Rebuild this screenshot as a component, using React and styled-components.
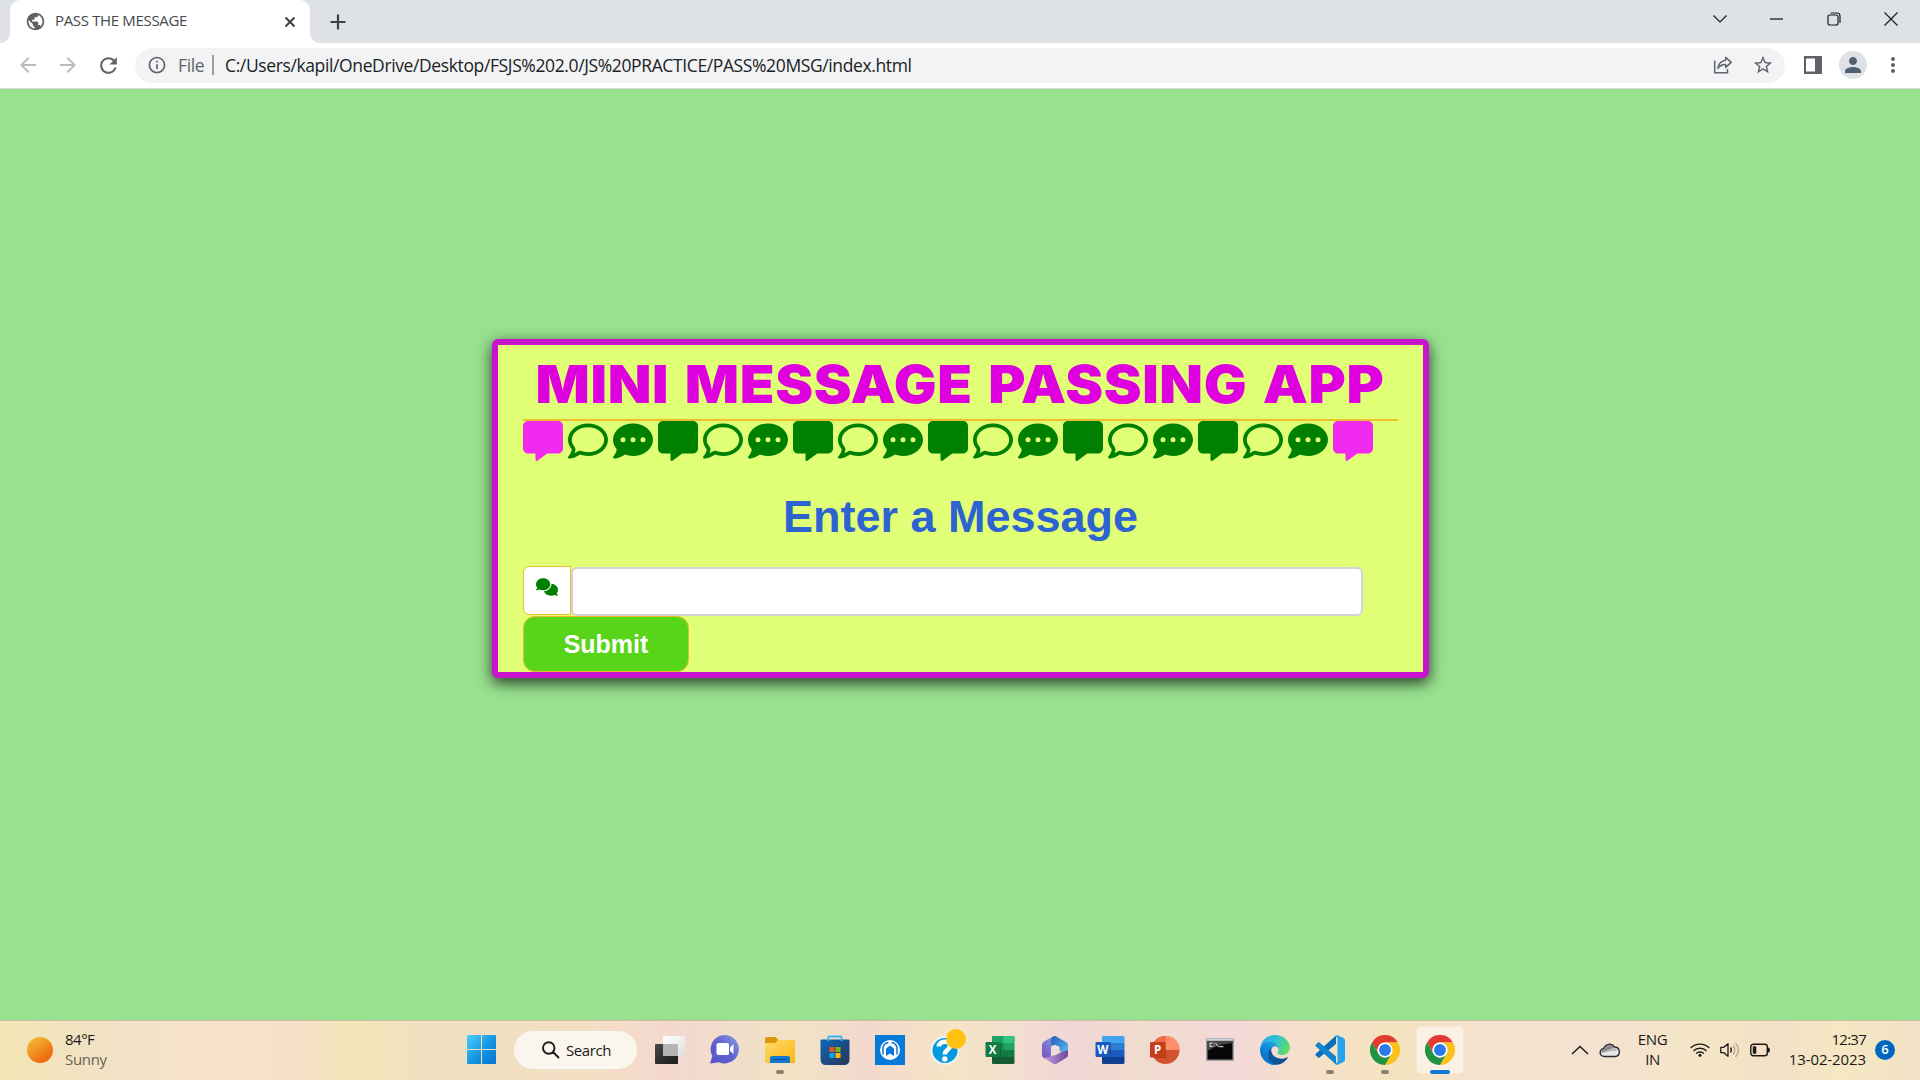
import React from "react";
import styled, { createGlobalStyle, css } from "styled-components";
import {
  MdPublic, MdInfoOutline, MdStarOutline, MdArrowBack, MdArrowForward,
  MdRefresh, MdMoreVert, MdPerson,
} from "react-icons/md";
import { FaMessage, FaRegComment, FaCommentDots, FaComments } from "react-icons/fa6";

const Global = createGlobalStyle`
  * { box-sizing: border-box; }
  html, body { margin: 0; padding: 0; overflow: hidden; }
  body { font-family: "Open Sans", "Noto Sans", sans-serif; }
  svg { display: block; flex: none; }
`;

const Screen = styled.div`
  width: 1920px;
  height: 1080px;
  display: flex;
  flex-direction: column;
  overflow: hidden;
`;

/* ---------- browser chrome ---------- */
const TabStrip = styled.header`
  height: 43px;
  flex: none;
  display: flex;
  align-items: stretch;
  padding-left: 10px;
  background: #dee1e6;
`;

const Tab = styled.div`
  position: relative;
  width: 300px;
  display: flex;
  align-items: center;
  padding: 0 14px 0 15px;
  background: #fff;
  border-radius: 10px 10px 0 0;
  &::before, &::after {
    content: "";
    position: absolute;
    bottom: 0;
    width: 10px;
    height: 10px;
  }
  &::before { left: -10px; background: radial-gradient(circle at 0 0, transparent 9.5px, #fff 10.5px); }
  &::after { right: -10px; background: radial-gradient(circle at 100% 0, transparent 9.5px, #fff 10.5px); }
`;

const TabTitle = styled.span`
  flex: 1;
  margin: -3px 0 0 9px;
  font-size: 15px;
  letter-spacing: -0.34px;
  line-height: 20px;
  color: #45494d;
  white-space: nowrap;
`;

const NewTab = styled.div`
  margin-left: 20px;
  display: flex;
  align-items: center;
`;

const WindowControls = styled.div`
  margin-left: auto;
  padding-right: 1px;
  display: flex;
`;

const WindowButton = styled.div`
  width: 57px;
  height: 37px;
  display: flex;
  align-items: center;
  justify-content: center;
`;

const Toolbar = styled.div`
  height: 46px;
  flex: none;
  display: flex;
  align-items: center;
  padding: 0 0 1px 8px;
  background: #fff;
  border-bottom: 1px solid #d5d8dc;
`;

const NavButton = styled.div`
  width: 40px;
  display: flex;
  justify-content: center;
  color: ${(p) => (p.$dim ? "#babcbe" : "#5f6368")};
`;

const AddressBar = styled.div`
  width: 1650px;
  height: 35px;
  margin: 0 8px 0 7px;
  padding: 0 2px 0 12px;
  display: flex;
  align-items: center;
  border-radius: 18px;
  background: #f1f3f4;
  color: #5f6368;
`;

const Scheme = styled.span`
  width: 34px;
  margin-left: 11px;
  font-size: 17.5px;
  letter-spacing: -0.4px;
`;

const Divider = styled.span`
  width: 2px;
  height: 20px;
  background: #9b9ea2;
`;

const Url = styled.span`
  flex: 1;
  margin-left: 11px;
  font-size: 17.5px;
  letter-spacing: -0.38px;
  color: #202124;
  white-space: nowrap;
`;

const ToolbarAction = styled.div`
  width: 40px;
  display: flex;
  justify-content: center;
  color: #5f6368;
`;

const Avatar = styled.div`
  width: 28px;
  height: 28px;
  border-radius: 50%;
  display: flex;
  align-items: center;
  justify-content: center;
  background: #dee1e6;
  color: #525e72;
`;

/* ---------- page ---------- */
const Page = styled.main`
  height: 931px;
  flex: none;
  display: flex;
  justify-content: center;
  align-items: flex-start;
  padding-top: 250px;
  background: #98e28f;
  font-family: "Liberation Sans", Arial, sans-serif;
`;

const Card = styled.section`
  width: 937px;
  height: 339px;
  margin-left: 1px;
  padding: 0 25px;
  display: flex;
  flex-direction: column;
  align-items: flex-start;
  border: 6px solid #c814cf;
  border-radius: 6px;
  background: #e0ff76;
  box-shadow: 0 5px 15px rgba(0, 0, 0, 0.75);
`;

const Title = styled.h1`
  width: 100%;
  height: 76px;
  margin: 0;
  padding-top: 7px;
  display: flex;
  justify-content: center;
  border-bottom: 2px solid #edbf2a;
`;

const TitleText = styled.span`
  font-family: Inter, "Liberation Sans", sans-serif;
  font-size: 52.6px;
  font-weight: 900;
  line-height: 64px;
  letter-spacing: 0.6px;
  word-spacing: 3.4px;
  white-space: nowrap;
  color: #df00df;
  transform: scaleX(1.08);
`;

const IconRow = styled.div`
  display: flex;
  gap: 5px;
  height: 40px;
`;

const Bubble = styled.span`
  width: 40px;
  height: 40px;
  color: ${(p) => (p.$pink ? "#f02aee" : "#008000")};
`;

const Prompt = styled.h2`
  width: 100%;
  height: 105px;
  margin: 0;
  padding-top: 3px;
  font-size: 45px;
  line-height: 105px;
  text-align: center;
  color: #2d62d1;
`;

const Field = styled.div`
  display: flex;
  align-items: flex-start;
`;

const FieldIcon = styled.span`
  width: 48px;
  height: 49px;
  display: flex;
  justify-content: center;
  padding-top: 9px;
  border: 1px solid #efbe2b;
  border-radius: 6px 0 0 6px;
  background: #fff;
  color: #008000;
`;

const Input = styled.input`
  width: 792px;
  height: 49px;
  margin: 1px 0 0;
  border: 2px solid #d3d3d3;
  border-radius: 6px;
  background: #fff;
  outline: none;
`;

const Submit = styled.button`
  width: 166px;
  height: 56px;
  padding: 0;
  border: 1px solid #e9bb26;
  border-radius: 12px;
  background: #58d518;
  font: bold 25px "Liberation Sans", Arial, sans-serif;
  color: #fff;
`;

/* ---------- taskbar ---------- */
const Taskbar = styled.footer`
  height: 60px;
  flex: none;
  display: flex;
  align-items: center;
  padding-bottom: 2px;
  border-top: 1px solid #cdbba9;
  background: linear-gradient(90deg, #f3e6b4 0, #f1e2c6 110px, #f8e3cb 210px, #f8dfcb 290px, #f2e6b8 350px,
    #efe0c2 450px, #f5dfc4 590px, #f4d8cf 670px, #f0decb 740px, #f1e3c4 790px, #f3d9cd 870px, #f5e4c4 950px,
    #f3dfcf 1010px, #f2d6d6 1070px, #f1dccf 1140px, #f3d8d8 1230px, #f5e2c6 1330px, #f4e3bf 1400px,
    #f5e2cf 1480px, #f4e2d0 1600px, #f5e6c6 1710px, #f3e0c6 1780px, #f5e8c2 1840px, #f1e1c6 1920px);
`;

const Weather = styled.div`
  width: 455px;
  padding-left: 27px;
  display: flex;
  align-items: center;
  gap: 12px;
`;

const Sun = styled.span`
  width: 26px;
  height: 26px;
  border-radius: 50%;
  background: linear-gradient(145deg, #efbb30 8%, #f29320 45%, #f0640c 85%);
`;

const Lines = styled.div`
  display: flex;
  flex-direction: column;
  align-items: ${(p) => p.$align || "flex-start"};
  padding-bottom: 2px;
  font-size: 15px;
  line-height: 20px;
  letter-spacing: ${(p) => p.$ls || 0}px;
  color: #1b1a18;
  white-space: nowrap;
`;

const Time = styled.span`
  letter-spacing: -0.75px;
`;

const Muted = styled.span`
  color: #6a6253;
  letter-spacing: -0.3px;
`;

const Slot = styled.div`
  position: relative;
  width: ${(p) => p.$w || 55}px;
  height: 57px;
  display: flex;
  align-items: center;
  justify-content: center;
`;

const ActiveTile = styled.div`
  width: 48px;
  height: 48px;
  display: flex;
  align-items: center;
  justify-content: center;
  border: 1px solid #f3e8d8;
  border-radius: 5px;
  background: #faf1e3;
`;

const Running = styled.span`
  position: absolute;
  left: 50%;
  bottom: 4px;
  height: 4px;
  border-radius: 2px;
  transform: translateX(-50%);
  ${(p) => p.$active
    ? css`width: 20px; background: #0a78d4;`
    : css`width: 8px; background: #8c8071;`}
`;

const NoticeDot = styled.span`
  position: absolute;
  left: 29px;
  top: 8px;
  width: 20px;
  height: 20px;
  border-radius: 50%;
  background: #ffc20e;
`;

const SearchPill = styled.div`
  width: 123px;
  height: 38px;
  margin: 0 5px 0 6px;
  padding-left: 28px;
  display: flex;
  align-items: center;
  gap: 6px;
  border-radius: 19px;
  background: #faf5ed;
  box-shadow: 0 0 0 1px #efe0cc;
  font-size: 15px;
  letter-spacing: -0.4px;
  color: #1b1a18;
`;

const Tray = styled.div`
  margin-left: auto;
  display: flex;
  align-items: center;
  padding-right: 25px;
`;

const TrayIcon = styled.div`
  width: ${(p) => p.$w}px;
  display: flex;
  justify-content: ${(p) => (p.$end ? "flex-end" : "center")};
`;

const Badge = styled.span`
  width: 20px;
  height: 20px;
  margin-left: 9px;
  border-radius: 50%;
  background: #0067c0;
  color: #fff;
  font-size: 13px;
  font-weight: 600;
  line-height: 19px;
  text-align: center;
`;

const GlyphText = styled.text`
  font-family: "Open Sans", sans-serif;
  font-weight: 700;
  fill: #fff;
`;

/* ---------- drawings ---------- */
const Stroke = ({ w, h, d, color = "#1b1b1b", sw = 1.2 }) => (
  <svg width={w} height={h} viewBox={`0 0 ${w} ${h}`} fill="none" stroke={color} strokeWidth={sw}>
    <path d={d} />
  </svg>
);

const ShareIcon = () => (
  <svg width="20" height="20" viewBox="0 0 20 20" fill="none" stroke="#5f6368" strokeWidth="1.5">
    <path d="M1.700 5.500V17.800H14.500V14" />
    <path d="M12.700 2.200 18.200 7.400 12.700 12.400V9.400C9 9.400 6.600 10.600 4.900 13.400 5.500 9 8 6 12.700 5.300Z" strokeLinejoin="round" />
  </svg>
);

const PanelIcon = () => (
  <svg width="18" height="18" viewBox="0 0 18 18">
    <path fill="#5f6368" fillRule="evenodd" d="M0 0H18V18H0ZM2 2.500V15.500H11V2.500Z" />
  </svg>
);

const WindowsLogo = () => (
  <svg width="29" height="29" viewBox="0 0 29 29">
    <defs>
      <linearGradient id="win" x1="0" y1="0" x2="1" y2="1">
        <stop offset="0" stopColor="#4fd0fb" /><stop offset=".55" stopColor="#1493e0" /><stop offset="1" stopColor="#0474cf" />
      </linearGradient>
    </defs>
    <path fill="url(#win)" d="M1 0H14V14H0V1Q0 0 1 0ZM15 0H28Q29 0 29 1V14H15ZM0 15H14V29H1Q0 29 0 28ZM15 15H29V28Q29 29 28 29H15Z" />
  </svg>
);

const TaskView = () => (
  <svg width="30" height="28" viewBox="0 0 30 28">
    <defs>
      <linearGradient id="tvd" x1="0" y1="0" x2="1" y2="1"><stop stopColor="#474744" /><stop offset="1" stopColor="#1b1b1b" /></linearGradient>
      <linearGradient id="tvl" x1="0" y1="0" x2="1" y2="1"><stop stopColor="#fff" /><stop offset="1" stopColor="#dededc" /></linearGradient>
    </defs>
    <rect x="0" y="8" width="23" height="20" rx="1" fill="url(#tvd)" />
    <rect x="8" y="0" width="22" height="20" rx="1" fill="url(#tvl)" />
    <rect x="8" y="8" width="15" height="12" fill="#b4b4b2" />
  </svg>
);

const ChatIcon = () => (
  <svg width="30" height="29" viewBox="0 0 30 29">
    <defs><linearGradient id="chat" x1="0" y1="1" x2="1" y2="0"><stop stopColor="#5a4fcf" /><stop offset=".5" stopColor="#5f62cf" /><stop offset="1" stopColor="#86a0e0" /></linearGradient></defs>
    <path fill="url(#chat)" d="M15 0A14.200 14.200 0 1 1 9 27.200L.8 28.500Q0 28.500.4 27.500L2.300 21A14.200 14.200 0 0 1 15 0Z" />
    <rect x="6.500" y="8" width="12.500" height="12" rx="1.800" fill="#fff" />
    <path fill="#fff" d="M20 12.500 23.500 9V19L20 15.800Z" />
  </svg>
);

const FolderIcon = () => (
  <svg width="30" height="28" viewBox="0 0 30 28">
    <defs><linearGradient id="fold" x1="0" y1="0" x2="1" y2="1"><stop stopColor="#ffdb69" /><stop offset="1" stopColor="#f9b714" /></linearGradient></defs>
    <path fill="#dc9709" d="M1.500 1H10.500L13.500 4H29V12H0V2.500Q0 1 1.500 1Z" />
    <path fill="url(#fold)" d="M0 7H10L13 4H29Q30 4 30 5V25.500Q30 27 28.500 27H1.500Q0 27 0 25.500Z" />
    <path fill="#1079ce" d="M5 27V22Q5 20 7 20H23Q25 20 25 22V27Z" />
    <path fill="#0a4f94" d="M8 23H22V24H8Z" />
  </svg>
);

const StoreIcon = () => (
  <svg width="30" height="30" viewBox="0 0 30 30">
    <defs><linearGradient id="store" x1="0" y1="0" x2="1" y2="1"><stop stopColor="#0d67b5" /><stop offset="1" stopColor="#2a3457" /></linearGradient></defs>
    <path fill="url(#store)" d="M1.500 4.500H28.500Q29.500 4.500 29.500 5.500V24Q29.500 30 24 30H6Q.5 30 .5 24V5.500Q.5 4.500 1.500 4.500Z" />
    <path fill="none" stroke="#35b8f0" strokeWidth="1.800" d="M8.300 6V2.500Q8.300 1.500 9.300 1.500H20.700Q21.700 1.500 21.700 2.500V6" />
    <path fill="#f25022" d="M9.500 12H14.500V17H9.500Z" /><path fill="#7fba00" d="M15.500 12H20.500V17H15.500Z" />
    <path fill="#00a4ef" d="M9.500 18H14.500V23H9.500Z" /><path fill="#ffb900" d="M15.500 18H20.500V23H15.500Z" />
  </svg>
);

const SupportIcon = () => (
  <svg width="30" height="30" viewBox="0 0 30 30">
    <path fill="#0779d8" d="M0 0H30V30H0Z" />
    <circle cx="15" cy="15" r="10" fill="#fff" />
    <path fill="#0779d8" d="M11 21V13.500L15 10.500 19 13.500V21L15 18.500Z" />
    <path fill="none" stroke="#0779d8" strokeWidth="1.500" d="M8 19.500V12.500Q9 8 13.500 7.500M22 19.500V12.500Q21 8 16.500 7.500" />
  </svg>
);

const HelpIcon = () => (
  <svg width="30" height="30" viewBox="0 0 30 30">
    <circle cx="15" cy="15.500" r="13.500" fill="#0498dc" stroke="#eaf4f8" strokeWidth="2" />
    <path fill="none" stroke="#fff" strokeWidth="4.600" d="M8.800 11.500C9 5.500 20 5 20 11 20 15 14.800 14.500 14.800 19.500" />
    <circle cx="14.800" cy="24" r="2.700" fill="#fff" />
  </svg>
);

const OfficeBook = ({ letter, bands, plate }) => (
  <svg width="30" height="28" viewBox="0 0 30 28">
    <path fill={bands[0]} d="M8 0H28Q29.500 0 29.500 1.500V7H7V1Q7 0 8 0Z" />
    <path fill={bands[1]} d="M7 7H29.500V14H7Z" /><path fill={bands[2]} d="M7 14H29.500V21H7Z" />
    <path fill={bands[3]} d="M7 21H29.500V26.500Q29.500 28 28 28H8Q7 28 7 27Z" />
    {bands[4] && <path fill={bands[4]} d="M18.500 0H28Q29.500 0 29.500 1.500V7H18.500Z" />}
    {bands[5] && <path fill={bands[5]} d="M7 7H18.500V14H7Z" />}
    <path fill="#000" opacity=".2" d="M7 6H16V21H7Z" />
    <rect x="0.500" y="6" width="14.500" height="15" rx="1.200" fill={plate} />
    <GlyphText x="7.700" y="17.700" fontSize="11.500" textAnchor="middle">{letter}</GlyphText>
  </svg>
);

const PowerPoint = () => (
  <svg width="30" height="28" viewBox="0 0 30 28">
    <circle cx="15.500" cy="14" r="14" fill="#d35230" />
    <path fill="#ed6c47" d="M1.500 14A14 14 0 0 1 15.500 0V14Z" />
    <path fill="#ff8f6b" d="M15.500 0A14 14 0 0 1 29.500 14H15.500Z" />
    <path fill="#000" opacity=".2" d="M3 6H16V22H5Z" />
    <rect x="0" y="6" width="15" height="15.500" rx="1.200" fill="#c43e1c" />
    <GlyphText x="7.600" y="18" fontSize="11.500" textAnchor="middle">P</GlyphText>
  </svg>
);

const M365Icon = () => (
  <svg width="26" height="28" viewBox="0 0 26 28">
    <defs>
      <linearGradient id="ma" x1="0" y1="1" x2="1" y2="0"><stop stopColor="#7a4fb5" /><stop offset="1" stopColor="#7fa6ec" /></linearGradient>
      <linearGradient id="mb" x1="0" y1="0" x2="1" y2="1"><stop stopColor="#2b56b8" /><stop offset="1" stopColor="#55c8f5" /></linearGradient>
      <linearGradient id="mc" x1="0" y1="0" x2="1" y2="0"><stop stopColor="#c79ae0" /><stop offset="1" stopColor="#6d4a9c" /></linearGradient>
    </defs>
    <path fill="url(#ma)" d="M11 .5 2 5.500Q0 7 0 9V19Q0 21 2 22L5 23.500 9 21V11L16 7V1.500Q13.500-.5 11 .5Z" />
    <path fill="url(#mb)" d="M13 .1 24 6Q26 7 26 9V19L17 14.500 17 11 9 8.500V4Q9.500 1 13 .1Z" />
    <path fill="url(#mc)" d="M2 22 11 27.500Q13 28.500 15 27.500L24 22Q26 21 26 19V14L17 17 9 20.500Z" />
    <path fill="#f3dddc" d="M9 11 13 8.800 17.500 11V17L13 19.500 9 17Z" />
  </svg>
);

const Cmd = () => (
  <svg width="28" height="24" viewBox="0 0 28 24">
    <rect width="28" height="23" rx="1" fill="#9b9ea2" />
    <path fill="#cdd3da" d="M1 .5H27V2.500H1Z" />
    <path fill="#070707" d="M1.500 3H26.500V21.500H1.500Z" />
    <path fill="#474747" d="M1.500 3H26.500V5Q12 6 1.500 13Z" />
    <path fill="none" stroke="#e5e5e5" strokeWidth="1" d="M6.500 5H4V8.500H6.500M8 5.500V6.300M8 7.700V8.500M9.500 5 12 8.500M12.500 8.700H17.500" />
  </svg>
);

const EdgeIcon = () => (
  <svg width="30" height="30" viewBox="0 0 256 256">
    <defs>
      <linearGradient id="e1" x1="0" y1=".5" x2="1" y2=".5"><stop stopColor="#0c59a4" /><stop offset="1" stopColor="#114a8b" /></linearGradient>
      <linearGradient id="e2" x1=".7" y1=".1" x2=".1" y2=".9"><stop stopColor="#1b9de2" /><stop offset=".5" stopColor="#0f86d8" /><stop offset="1" stopColor="#0368c4" /></linearGradient>
      <linearGradient id="e3" x1="0" y1=".3" x2="1" y2=".6"><stop stopColor="#26a6e8" /><stop offset=".5" stopColor="#2fc3d2" /><stop offset="1" stopColor="#66e05a" /></linearGradient>
    </defs>
    <path fill="url(#e1)" d="M231 190.500c-3.400 1.800-6.900 3.400-10.500 4.700-11.600 4.300-23.800 6.500-36.100 6.500-47.500 0-88.900-32.700-88.900-74.600.1-11.500 6.400-21.900 16.400-27.300-43 1.800-54 46.600-54 72.800 0 74.200 68.400 81.700 83.100 81.700 7.900 0 19.900-2.300 27.100-4.600l1.300-.4c27.600-9.500 51.100-28.100 66.600-52.800 1.200-1.900.6-4.400-1.300-5.600-1.100-.8-2.500-.9-3.700-.4Z" />
    <path fill="url(#e2)" d="M105.700 241.400C96.800 235.900 89 228.600 82.900 220c-26.300-36-18.500-86.500 17.500-112.900 3.800-2.700 7.700-5.200 11.900-7.200 3.100-1.500 8.400-4.100 15.500-4 10.100.1 19.600 4.900 25.700 13 4 5.400 6.300 11.900 6.400 18.700 0-.2 24.500-79.600-80-79.600-43.900 0-80 41.700-80 78.200-.2 19.300 4 38.500 12.100 56 27.600 58.800 94.800 87.600 156.400 67.100-21.100 6.600-44.100 3.700-62.900-8Z" />
    <path fill="url(#e3)" d="M152.300 148.900c-.8 1-3.300 2.500-3.300 5.700 0 2.600 1.700 5.100 4.700 7.200 14.400 10 41.500 8.700 41.600 8.700 10.700 0 21.100-2.900 30.300-8.300 18.800-11 30.400-31.200 30.400-53 .3-22.400-8-37.300-11.300-43.900C223.500 23.900 177.700 0 128 0 58 0 1 56.200 0 126.200c.5-36.500 36.800-66 80-66 3.500 0 23.500.3 42 10 16.300 8.600 24.900 18.900 30.800 29.200 6.200 10.700 7.300 24.100 7.300 29.500 0 5.300-2.700 13.300-7.800 20Z" />
  </svg>
);

const VSCodeIcon = () => (
  <svg width="30" height="30" viewBox="0 0 30 30">
    <path fill="#0a6ebd" d="M21 .5V9L4.500 22.500Q3.500 23 2.700 22.300L.8 20.500Q0 19.500.8 18.800Z" />
    <path fill="#1285cc" d="M21 29.500V21.500L4.500 7.500Q3.500 7 2.700 7.700L.8 9.500Q0 10.500.8 11.200Z" />
    <path fill="#25a2f0" d="M22 0 28.500 3Q30 3.800 30 5V25Q30 26.200 28.500 27L22 30Q20.500 30 20.500 28.500L22.500 27V3L20.500 1.500Q21 .2 22 0Z" />
  </svg>
);

const ChromeIcon = () => (
  <svg width="30" height="30" viewBox="0 0 48 48">
    <path fill="#e33b2e" d="M3.200 12A24 24 0 0 1 44.800 12H24A12 12 0 0 0 13.600 30Z" />
    <path fill="#fcc21b" d="M44.800 12A24 24 0 0 1 24 48L34.400 30A12 12 0 0 0 24 12Z" />
    <path fill="#229342" d="M24 48A24 24 0 0 1 3.200 12L13.600 30A12 12 0 0 0 34.400 30Z" />
    <circle cx="24" cy="24" r="12" fill="#fff" /><circle cx="24" cy="24" r="9.500" fill="#2a7be9" />
  </svg>
);

const CloudIcon = () => (
  <svg width="22" height="16" viewBox="0 0 22 16">
    <path fill="#e8e8e8" stroke="#2a2a2a" strokeWidth="1.400" d="M5.500 14.500A4 4 0 0 1 4.800 6.500 6 6 0 0 1 15.500 5 4.800 4.800 0 0 1 16.500 14.500Z" />
    <path fill="#85878a" d="M2.500 11A3.500 3.500 0 0 1 5.300 7.200 5.300 5.300 0 0 1 15 5.600L8.500 8.500Z" />
    <path fill="#b9babc" d="M3 11.500 14 6Q17 5.500 19 8.500L10 9.500Z" />
  </svg>
);

const WifiIcon = () => (
  <svg width="20" height="16" viewBox="0 0 20 16" fill="none" stroke="#1b1a18" strokeWidth="1.400">
    <path d="M.7 6A13 13 0 0 1 19.300 6M3.500 8.900A9.200 9.200 0 0 1 16.500 8.900M6.200 11.500A5.400 5.400 0 0 1 13.800 11.500" />
    <circle cx="10" cy="13.300" r="1.500" fill="#1b1a18" stroke="none" />
  </svg>
);

const SpeakerIcon = () => (
  <svg width="20" height="16" viewBox="0 0 20 16" fill="none" strokeWidth="1.300">
    <path stroke="#1b1a18" strokeLinejoin="round" d="M.8 5.300H3.800L8 1.700V14.300L3.800 10.700H.8Z" />
    <path stroke="#1b1a18" d="M10.500 5.500Q12.300 8 10.500 10.500" />
    <path stroke="#b5a893" d="M13 3.300Q16.500 8 13 12.700M15.500 1Q21.500 8 15.500 15" />
  </svg>
);

const BatteryIcon = () => (
  <svg width="20" height="14" viewBox="0 0 20 14">
    <rect x=".8" y="1.300" width="16.500" height="11.400" rx="2.500" fill="none" stroke="#1b1a18" strokeWidth="1.400" />
    <rect x="2.800" y="3.300" width="3.500" height="7.400" rx=".8" fill="#1b1a18" />
    <path fill="#1b1a18" d="M17.500 4.500H18.500Q20 5 20 7T18.500 9.500H17.500Z" />
  </svg>
);

const bubbleCycle = [FaMessage, FaRegComment, FaCommentDots];
const bubbles = Array.from({ length: 19 }, (_, i) => bubbleCycle[i % 3]);

const apps = [
  { name: "view", icon: <TaskView /> },
  { name: "chat", icon: <ChatIcon /> },
  { name: "files", icon: <FolderIcon />, running: true },
  { name: "store", icon: <StoreIcon /> },
  { name: "support", icon: <SupportIcon /> },
  { name: "help", icon: <HelpIcon />, notice: true },
  { name: "excel", icon: <OfficeBook letter="X" plate="#107c41" bands={["#21a366", "#21a366", "#107c41", "#185c37", "#33c481", "#17864c"]} /> },
  { name: "m365", icon: <M365Icon /> },
  { name: "word", icon: <OfficeBook letter="W" plate="#185abd" bands={["#41a5ee", "#2b7cd3", "#185abd", "#103f91"]} /> },
  { name: "ppt", icon: <PowerPoint /> },
  { name: "cmd", icon: <Cmd /> },
  { name: "edge", icon: <EdgeIcon /> },
  { name: "code", icon: <VSCodeIcon />, running: true },
  { name: "chrome", icon: <ChromeIcon />, running: true },
  { name: "chrome-active", icon: <ChromeIcon />, running: true, active: true },
];

export default function App() {
  return (
    <Screen>
      <Global />
      <TabStrip>
        <Tab>
          <MdPublic size={21} color="#5f6368" />
          <TabTitle>PASS THE MESSAGE</TabTitle>
          <Stroke w={12} h={12} sw={2} color="#3c4043" d="M1.500 1.500 10.500 10.500M10.500 1.500 1.500 10.500" />
        </Tab>
        <NewTab><Stroke w={16} h={16} sw={2.2} color="#3c4043" d="M8 .5V15.500M.5 8H15.500" /></NewTab>
        <WindowControls>
          <WindowButton><Stroke w={14} h={8} d="M.5 .5 7 7 13.500 .5" /></WindowButton>
          <WindowButton><Stroke w={13} h={2} d="M0 1H13" sw={1.3} /></WindowButton>
          <WindowButton><Stroke w={14} h={14} d="M3 3H9Q11 3 11 5V11Q11 13 9 13H3Q1 13 1 11V5Q1 3 3 3ZM3.500 1H10Q13 1 13 4V11" /></WindowButton>
          <WindowButton><Stroke w={14} h={14} d="M.5 .5 13.500 13.500M13.500 .5 .5 13.500" /></WindowButton>
        </WindowControls>
      </TabStrip>
      <Toolbar>
        <NavButton $dim><MdArrowBack size={24} /></NavButton>
        <NavButton $dim><MdArrowForward size={24} /></NavButton>
        <NavButton><MdRefresh size={25} /></NavButton>
        <AddressBar>
          <MdInfoOutline size={20} />
          <Scheme>File</Scheme>
          <Divider />
          <Url>C:/Users/kapil/OneDrive/Desktop/FSJS%202.0/JS%20PRACTICE/PASS%20MSG/index.html</Url>
          <ToolbarAction><ShareIcon /></ToolbarAction>
          <ToolbarAction><MdStarOutline size={22} /></ToolbarAction>
        </AddressBar>
        <ToolbarAction><PanelIcon /></ToolbarAction>
        <ToolbarAction><Avatar><MdPerson size={24} /></Avatar></ToolbarAction>
        <ToolbarAction><MdMoreVert size={24} /></ToolbarAction>
      </Toolbar>

      <Page>
        <Card>
          <Title><TitleText>MINI MESSAGE PASSING APP</TitleText></Title>
          <IconRow>
            {bubbles.map((Icon, i) => (
              <Bubble key={i} $pink={i === 0 || i === bubbles.length - 1}><Icon size={40} /></Bubble>
            ))}
          </IconRow>
          <Prompt>Enter a Message</Prompt>
          <Field>
            <FieldIcon><FaComments size={22} /></FieldIcon>
            <Input />
          </Field>
          <Submit>Submit</Submit>
        </Card>
      </Page>

      <Taskbar>
        <Weather>
          <Sun />
          <Lines $ls={-0.5}><span>84°F</span><Muted>Sunny</Muted></Lines>
        </Weather>
        <Slot $w={53}><WindowsLogo /></Slot>
        <SearchPill>
          <Stroke w={18} h={18} sw={1.9} d="M12.500 7A5.700 5.700 0 1 1 1 7 5.700 5.700 0 0 1 12.500 7ZM11 11 17 17" />
          <span>Search</span>
        </SearchPill>
        {apps.map((a) => (
          <Slot key={a.name}>
            {a.active ? <ActiveTile>{a.icon}</ActiveTile> : a.icon}
            {a.notice && <NoticeDot />}
            {a.running && <Running $active={a.active} />}
          </Slot>
        ))}
        <Tray>
          <TrayIcon $w={30}><Stroke w={18} h={10} sw={1.5} d="M1 9 9 1.500 17 9" /></TrayIcon>
          <TrayIcon $w={30}><CloudIcon /></TrayIcon>
          <TrayIcon $w={55}><Lines $align="center" $ls={-0.4}><span>ENG</span><span>IN</span></Lines></TrayIcon>
          <TrayIcon $w={40}><WifiIcon /></TrayIcon>
          <TrayIcon $w={20}><SpeakerIcon /></TrayIcon>
          <TrayIcon $w={40}><BatteryIcon /></TrayIcon>
          <TrayIcon $w={86} $end>
            <Lines $align="flex-end" $ls={-0.1}><Time>12:37</Time><span>13-02-2023</span></Lines>
          </TrayIcon>
          <Badge>6</Badge>
        </Tray>
      </Taskbar>
    </Screen>
  );
}
